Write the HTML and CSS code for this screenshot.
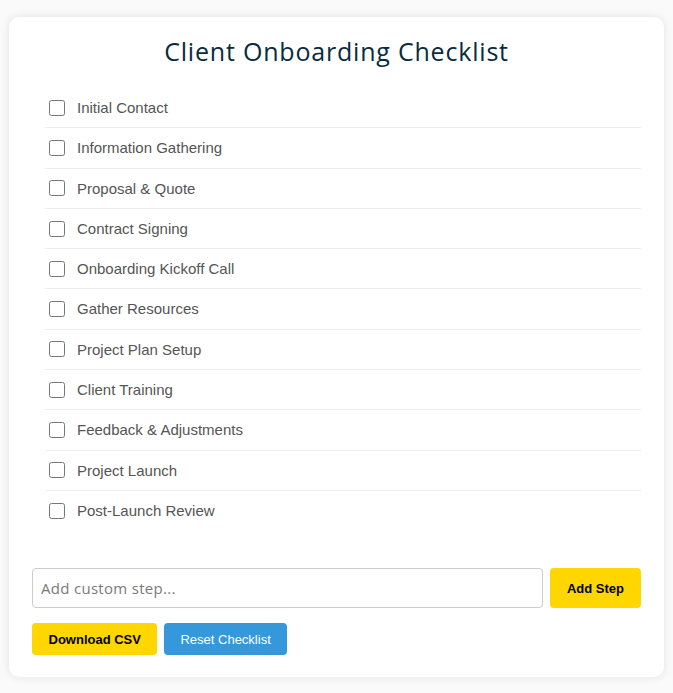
FILE: index.html
```html
<!DOCTYPE html>
<html lang="en">
<head>
    <meta charset="UTF-8">
    <meta name="viewport" content="width=device-width, initial-scale=1.0">
    <title>Client Onboarding Checklist</title>
    <link rel="stylesheet" href="styles.css">
</head>
<body>
    <div class="card">
        <h1 class="title">Client Onboarding Checklist</h1>

        <!-- Checklist steps -->
        <ul class="steps">
            <li class="step"><input type="checkbox"><span>Initial Contact</span></li>
            <li class="step"><input type="checkbox"><span>Information Gathering</span></li>
            <li class="step"><input type="checkbox"><span>Proposal &amp; Quote</span></li>
            <li class="step"><input type="checkbox"><span>Contract Signing</span></li>
            <li class="step"><input type="checkbox"><span>Onboarding Kickoff Call</span></li>
            <li class="step"><input type="checkbox"><span>Gather Resources</span></li>
            <li class="step"><input type="checkbox"><span>Project Plan Setup</span></li>
            <li class="step"><input type="checkbox"><span>Client Training</span></li>
            <li class="step"><input type="checkbox"><span>Feedback &amp; Adjustments</span></li>
            <li class="step"><input type="checkbox"><span>Project Launch</span></li>
            <li class="step"><input type="checkbox"><span>Post-Launch Review</span></li>
        </ul>

        <!-- Add a custom step -->
        <div class="add-row">
            <input type="text" class="step-input" placeholder="Add custom step...">
            <button class="btn btn-yellow btn-add">Add Step</button>
        </div>

        <div class="actions">
            <button class="btn btn-yellow">Download CSV</button>
            <button class="btn btn-blue">Reset Checklist</button>
        </div>
    </div>
</body>
</html>
```

FILE: styles.css
```css
body {
    margin: 0;
    padding: 17px 9px 16px;
    background-color: #fafafa;
    font-family: "Liberation Sans", Arial, sans-serif;
}

.card {
    background-color: #fff;
    border-radius: 10px;
    box-shadow: 0 0 10px rgba(0, 0, 0, 0.1);
    padding: 16px 23px 22px;
}

.title {
    margin: 0 0 19px;
    text-align: center;
    font-family: "Open Sans", sans-serif;
    font-size: 25px;
    font-weight: 500;
    letter-spacing: 0.8px;
    line-height: 36px;
    color: #082b40;
}

.steps {
    list-style: none;
    margin: 0 0 38px 13px;
    padding: 0;
}

.step {
    display: flex;
    align-items: center;
    padding: 10px 0;
    border-bottom: 1px solid #eee;
    font-size: 15px;
    line-height: 19.3px;
    color: #555;
}

.step:last-child {
    border-bottom: none;
}

.step input {
    width: 16px;
    height: 16px;
    margin: 0 12px 0 4px;
}

.add-row {
    display: flex;
    gap: 7px;
    margin-bottom: 15px;
}

.step-input {
    flex: 1;
    height: 40px;
    box-sizing: border-box;
    padding: 0 8px;
    border: 1px solid #ccc;
    border-radius: 4px;
    font-family: "Open Sans", sans-serif;
    font-size: 15px;
    letter-spacing: 0.3px;
}

.step-input::placeholder {
    color: #7a7a7a;
}

.btn {
    border: none;
    border-radius: 4px;
    padding: 0 16.5px;
    height: 32px;
    font-family: "Liberation Sans", Arial, sans-serif;
    font-size: 13px;
    cursor: pointer;
}

.add-row .btn-add {
    height: 40px;
    padding: 0 17px;
}

.btn-yellow {
    background-color: #ffd600;
    color: #000;
    font-weight: bold;
}

.btn-blue {
    background-color: #3498db;
    color: #fff;
    padding: 0 16px;
}

.actions {
    display: flex;
    gap: 7px;
}
```
